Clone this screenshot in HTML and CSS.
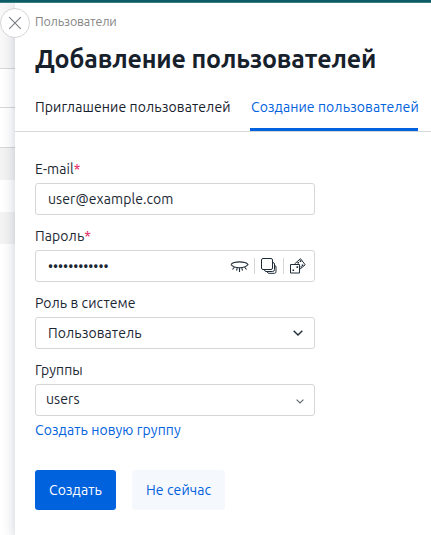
FILE: index.html
```
<!DOCTYPE html>
<html lang="ru">
<head>
<meta charset="utf-8">
<title>Добавление пользователей</title>
<link rel="stylesheet" href="styles.css">
</head>
<body>
<div class="topbar"></div>
<div class="layout">
  <div class="page-rows" aria-hidden="true">
    <div class="row-head"></div>
    <div class="row-filter"></div>
    <div class="row-columns"></div>
    <div class="row row-odd"></div>
    <div class="row"></div>
    <div class="row row-odd"></div>
  </div>
  <main class="panel">
    <button class="close" aria-label="Закрыть">
      <svg width="14" height="14" viewBox="0 0 14 14"><path d="M1.2 1.2 12.8 12.8M12.8 1.2 1.2 12.8"/></svg>
    </button>
    <div class="breadcrumb"><span>Пользователи</span></div>
    <h1>Добавление пользователей</h1>
    <nav class="tabs">
      <a class="tab tab-invite">Приглашение пользователей</a>
      <a class="tab tab-create active">Создание пользователей</a>
    </nav>
    <form class="form">
      <div class="field">
        <div class="label"><span>E-mail</span><span class="req">*</span></div>
        <div class="control"><span>user@example.com</span></div>
      </div>
      <div class="field">
        <div class="label"><span>Пароль</span><span class="req">*</span></div>
        <div class="control control-password">
          <span class="dots">••••••••••••</span>
          <div class="tools">
            <svg class="eye" width="19" height="16" viewBox="0 0 19 16"><path d="M1 6.500C4 3 15 3 18 6.500C15 10.800 4 10.800 1 6.500M4.500 9 2.500 11.500M7.300 10 6.500 12.500M9.500 10V14M11.700 10 12.500 12.500M14.500 9 16.500 11.500"/></svg>
            <i></i>
            <svg width="18" height="18" viewBox="0 0 18 18"><path d="M3 1.500H11Q12.500 1.500 12.500 3V11Q12.500 12.500 11 12.500H3Q1.500 12.500 1.500 11V3Q1.500 1.500 3 1.500ZM12.500 5.500Q14.500 5.500 14.500 7V12.500Q14.500 14.500 12.500 14.500H6Q4.500 14.500 4.500 12.500M14.500 8.500Q16 8.500 16 10V14.500Q16 16.300 14.500 16.300H9Q7.500 16.300 7 14.500"/></svg>
            <i></i>
            <svg width="18" height="18" viewBox="0 0 18 18"><path d="M1.500 7.500H10.500V16H1.500ZM5.500 7 11.500 1.700 16.200 7.800 10.500 12.500"/><path class="pip" d="M3.500 12.500h1.600v1.600H3.500zM7.500 9.300h1.600v1.600H7.500zM8.400 4.900h1.600v1.600H8.400zM10.700 3.300h1.600v1.600h-1.600zM12.700 7.500h1.600v1.600h-1.600zM11.500 9.300h1.300v1.300h-1.300z"/></svg>
          </div>
        </div>
      </div>
      <div class="field">
        <div class="label"><span>Роль в системе</span></div>
        <div class="control control-role">
          <span>Пользователь</span>
          <svg class="chevron" width="10" height="6" viewBox="0 0 10 6"><path d="M.7.7 5 4.900 9.300.7"/></svg>
        </div>
      </div>
      <div class="field">
        <div class="label"><span>Группы</span></div>
        <div class="control control-groups">
          <span>users</span>
          <svg class="chevron chevron-small" width="8" height="5" viewBox="0 0 8 5"><path d="M.6.7 4 4 7.400.7"/></svg>
        </div>
      </div>
      <a class="new-group"><span>Создать новую группу</span></a>
      <div class="actions">
        <button type="button" class="btn primary"><span>Создать</span></button>
        <button type="button" class="btn secondary"><span>Не сейчас</span></button>
      </div>
    </form>
  </main>
</div>
</body>
</html>
```
FILE: styles.css
```
* { box-sizing: border-box; }
body {
  margin: 0;
  height: 535px;
  overflow: hidden;
  background: #fff;
  color: #1b2733;
  font: 14px/20px Ubuntu, "Noto Sans", sans-serif;
  letter-spacing: .09px;
  white-space: nowrap;
}
.topbar { height: 3px; background: #0b5c64; border-bottom: 1px solid #3d7f86; }
.layout { display: grid; grid-template-columns: 15px 1fr; height: 532px; }
.row-head { height: 66px; background: #f8f8f8; border-bottom: 1px solid #d6d7d9; }
.row-filter { height: 39px; border-bottom: 1px solid #d6d7d9; }
.row-columns { height: 40px; border-bottom: 1px solid #d6d7d9; }
.row { height: 32px; }
.row-odd { background: #f3f3f3; }
.panel { position: relative; background: #fff; box-shadow: 0 3px 12px rgba(30, 45, 75, .24); clip-path: inset(0 0 0 -15px); }
.close {
  position: absolute;
  left: -15px;
  top: 5px;
  width: 30px;
  height: 30px;
  padding: 0;
  display: grid;
  place-items: center;
  background: #fff;
  border: 1px solid #d5d6d8;
  border-radius: 50%;
}
svg { display: block; fill: none; stroke: #1f2c38; stroke-width: 1; }
.close svg { stroke: #777b80; stroke-width: 1.1; }
.breadcrumb { height: 38px; padding: 8px 0 0 20px; font-size: 12.5px; letter-spacing: -.16px; color: #858585; }
h1 { margin: 0; padding: 0 0 0 20px; height: 46px; font-size: 25px; line-height: 36px; font-weight: 600; letter-spacing: -.16px; color: #17212c; }
.tabs { display: flex; gap: 20px; height: 45px; padding-left: 20px; border-bottom: 1px solid #d6d7d9; }
.tab { height: 44px; padding-top: 10px; color: #17212c; }
.tab-invite { width: 195px; letter-spacing: .11px; }
.tab-create { width: 168px; padding-left: 1px; }
.active { color: #0062dd; border-bottom: 3px solid #0062dd; border-radius: 2px 2px 0 0; }
.form { width: 300px; padding: 27px 0 0 20px; }
.field { height: 67px; }
.label { display: flex; height: 24px; }
.req { color: #df1558; }
.control {
  height: 32px;
  padding: 0 12px;
  border: 1px solid #d5d6d8;
  border-radius: 3px;
  display: flex;
  align-items: center;
  justify-content: space-between;
}
.control-role { padding-right: 11px; }
.control-groups { padding: 0 10px 2px; }
.control-password { padding-right: 7px; }
.dots { letter-spacing: 0; }
.tools { display: flex; align-items: center; gap: 5px; }
.tools i { width: 1px; height: 16px; background: #d5d6d8; }
.eye { stroke-width: 1.1; }
.pip { fill: #1f2c38; stroke: none; }
.chevron { stroke-width: 1.4; }
.chevron-small { stroke: #5f6670; stroke-width: 1.1; margin-top: 4px; }
.new-group { display: block; height: 50px; margin-top: -7px; color: #0062dd; }
.actions { display: flex; gap: 16px; }
.btn { height: 40px; padding: 0 14px; border: 0; border-radius: 3px; font: inherit; letter-spacing: inherit; text-align: left; }
.primary { width: 81px; background: #0062dd; color: #fff; }
.secondary { width: 93px; background: #f5f8fd; color: #0062dd; }
```
